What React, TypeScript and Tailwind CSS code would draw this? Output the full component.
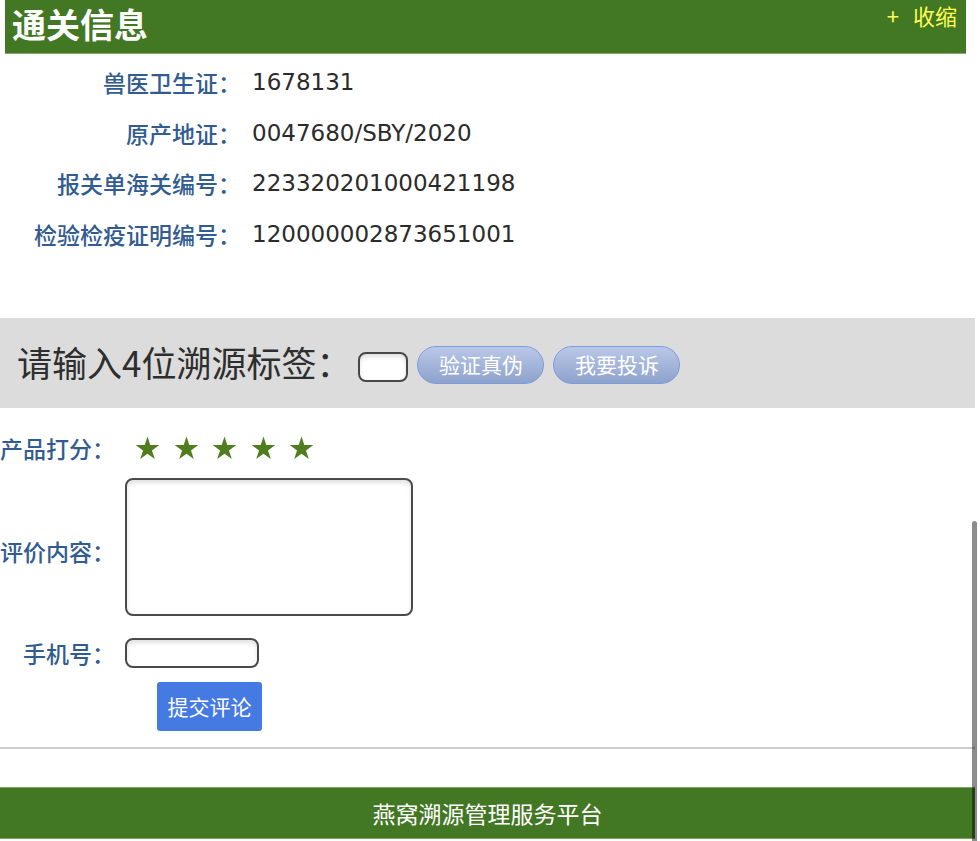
import { useState } from "react";

const cjk = "font-['Noto_Sans_CJK_SC',sans-serif]";
const latin = "font-['DejaVu_Sans','Noto_Sans_CJK_SC',sans-serif]";

const customsInfo = [
  { label: "兽医卫生证：", value: "1678131" },
  { label: "原产地证：", value: "0047680/SBY/2020" },
  { label: "报关单海关编号：", value: "223320201000421198" },
  { label: "检验检疫证明编号：", value: "120000002873651001" },
];

function Star() {
  return (
    <svg width="25" height="24" viewBox="0 0 24 23" className="shrink-0">
      <path
        d="M12 0.5l2.7 8.2h8.6l-7 5.1 2.7 8.2L12 16.9l-7 5.1 2.7-8.2-7-5.1h8.6z"
        fill="#4f7d1f"
      />
    </svg>
  );
}

const formLabel = "w-[115px] shrink-0 whitespace-nowrap text-right text-[23px] font-medium text-[#325c91]";
const fieldBox = "border-2 border-[#4a4a4a] rounded-[8px] shadow-[inset_0_3px_4px_rgba(0,0,0,0.12)] outline-none bg-white";
const pillButton =
  "ml-[9px] mt-[4px] w-[127px] h-[38px] rounded-full border border-[#7d9be0] bg-gradient-to-b from-[#bac8e8] to-[#8ea2cc] text-white text-[21px]";

export default function App() {
  const [expanded, setExpanded] = useState(true);

  return (
    <div className={`relative w-[980px] h-[841px] overflow-hidden bg-white ${cjk}`}>
      <div className="w-[975px]">
        {/* section header */}
        <div className="ml-[5px] w-[961px] h-[54px] bg-[#427724] border-b border-[#86a96a] flex justify-between">
          <span className="pl-[7px] pt-[2px] text-[34px] leading-[44px] font-bold text-white">通关信息</span>
          <button
            onClick={() => setExpanded(!expanded)}
            className="pr-[9px] text-[22px] leading-[30px] text-[#ffff55] self-start flex gap-[14px]"
          >
            <span>+</span>
            <span>收缩</span>
          </button>
        </div>

        <div className="pt-[3px] h-[264px]">
          {expanded &&
            customsInfo.map((row) => (
              <div key={row.label} className="flex items-center h-[50.7px]">
                <span className="w-[241px] shrink-0 whitespace-nowrap text-right text-[23px] font-medium text-[#325c91]">
                  {row.label}
                </span>
                <span className={`pl-[11px] text-[23px] text-[#2b2b2b] ${latin}`}>{row.value}</span>
              </div>
            ))}
        </div>

        {/* trace code check */}
        <div className="h-[90px] bg-[#dcdcdc] flex items-center">
          <span className="pl-[17px] pb-[3px] text-[35px] text-[#2e2e2e] leading-none whitespace-nowrap">请输入4位溯源标签：</span>
          <input type="text" className={`ml-[7px] mt-[8px] w-[50px] h-[30px] ${fieldBox} border-[#474747]`} />
          <button className={pillButton}>验证真伪</button>
          <button className={pillButton}>我要投诉</button>
        </div>

        {/* review form */}
        <div className="mt-[22px] flex items-center h-[36px]">
          <span className={formLabel}>产品打分：</span>
          <div className="ml-[20px] flex items-center gap-[13.5px]">
            <Star />
            <Star />
            <Star />
            <Star />
            <Star />
          </div>
        </div>

        <div className="mt-[12px] flex items-center">
          <span className={`${formLabel} pt-[8px]`}>评价内容：</span>
          <textarea className={`ml-[10px] w-[288px] h-[138px] resize-none ${fieldBox}`} />
        </div>

        <div className="mt-[20px] flex items-center h-[34px]">
          <span className={formLabel}>手机号：</span>
          <input type="text" className={`ml-[10px] w-[134px] h-[30px] ${fieldBox}`} />
        </div>

        <button className="ml-[157px] mt-[12px] w-[105px] h-[49px] rounded-[3px] bg-[#457ae3] text-white text-[21px]">
          提交评论
        </button>

        <div className="mt-[16px] h-[2px] bg-[#cdcdcd]" />

        <div className="mt-[38px] h-[52px] bg-[#427724] border-t border-b border-[#7ea462] flex items-center justify-center text-[23px] text-white">
          燕窝溯源管理服务平台
        </div>
      </div>

      {/* overlay scrollbar */}
      <div className="absolute left-[972px] top-[521px] w-[5px] h-[330px] rounded-full bg-black/45" />
    </div>
  );
}
